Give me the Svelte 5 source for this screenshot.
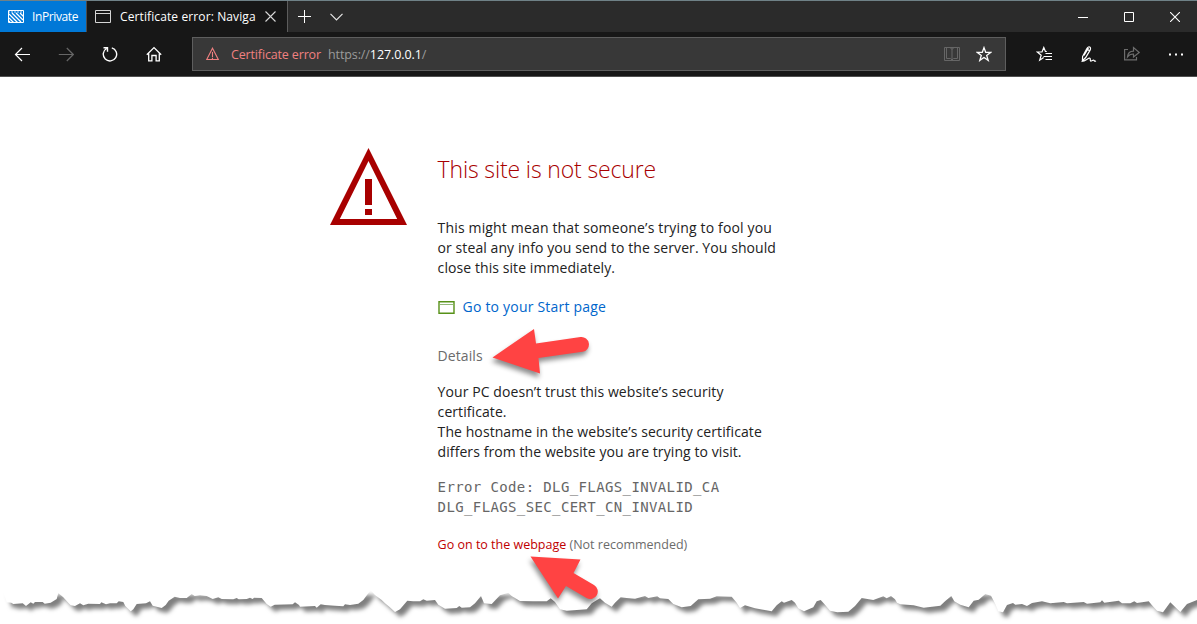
<script>
  const edgeParts = [
    [0, '20,67 34,68 40,72 68,70 78,78 92,67 100,71 105,66 128,66 134,71 152,68 170,57 175,39 190,52 206,70 212,76 225,78 240,70 250,76 265,71 300,72 304,67 318,73 330,70 350,70 356,64 370,66 376,78 392,94 400,88 410,72 438,70 450,64 458,77 485,84 497,75 506,62 524,50 540,54 560,54 575,42 584,48 600,46 620,48 638,57 655,52 665,57 700,58 710,54 716,58 740,57 750,53 758,57 762,53 785,54 800,72 812,80 824,74 878,73 885,67 897,75'],
    [300, '0,80 45,78 50,83 62,73 75,75 105,77 130,79 135,73 150,75 175,71 190,60 212,30 225,45 245,60 255,70 268,80 285,96 300,88 322,62 340,64 360,64 370,58 380,62 405,60 415,74 435,86 470,84 478,78 485,83 510,82 525,70 543,48 552,70 575,72 600,46 625,38 635,48 660,63 700,64 740,64 752,55 765,66 780,88 800,92 860,88 875,70 897,56'],
    [600, '0,55 15,68 35,80 45,68 62,52 80,54 105,56 135,48 145,54 172,49 180,55 205,57 220,72 245,82 272,78 295,58 330,56 350,49 395,50 410,68 420,84 435,76 465,85 515,94 530,76 545,64 552,68 575,60 585,68 595,85 612,94 640,82 650,64 662,60 675,74 690,92 712,97 745,95 765,78 785,54 820,60 850,49 860,55 873,48 885,58'],
    [897, '0,68 10,73 50,76 80,83 130,77 145,63 163,48 172,64 190,74 215,82 230,62 245,59 265,42 282,47 295,72 304,94 318,97 330,75 348,69 355,74 375,72 390,78 405,69 435,64 460,70 500,66 510,70 560,66 570,71 610,67 615,61 622,68 665,62 675,70 700,70 712,64 720,69 755,64 765,76 780,92 798,97 820,67 850,96 870,72 900,60']
  ];
  const tear = edgeParts
    .flatMap(([x0, pts]) => pts.split(' ').map((p) => {
      const [x, y] = p.split(',').map(Number);
      return `${(x0 + x / 3).toFixed(1)},${(y / 3).toFixed(1)}`;
    }))
    .join(' ');
</script>

<div class="window">
  <header class="tabs">
    <div class="private">
      <svg width="16" height="13" viewBox="0 0 16 13" fill="none" stroke="#fff">
        <path d="M.5 .5h15v12H.5z" />
        <path d="M0 2h16" stroke-width="1" stroke-dasharray="2 1" opacity=".8" />
        <path d="M1 4l9 9M1 8l5 5M4 3l9 9M8 3l7 7M12 3l4 4M1 11l1 1" stroke-width="1.3" />
      </svg>
      <span>InPrivate</span>
    </div>
    <div class="tab">
      <svg width="16" height="13" viewBox="0 0 16 13" fill="none" stroke="#d5d5d5"><path d="M.5 .5h15v12H.5zM0 3.5h16" /></svg>
      <span class="tabtitle">Certificate error: Naviga</span>
      <svg width="11" height="11" viewBox="0 0 11 11" stroke="#d8d8d8" stroke-width="1.1"><path d="M.5 .5l10 10M10.500 .5l-10 10" /></svg>
    </div>
    <div class="tabtools">
      <svg width="13" height="13" viewBox="0 0 13 13" stroke="#fff"><path d="M6.500 0v13M0 6.500h13" /></svg>
      <svg width="14" height="8" viewBox="0 0 14 8" fill="none" stroke="#e6e6e6" stroke-width="1.2"><path d="M.5 .8L6.500 7l6-6.200" /></svg>
    </div>
    <div class="controls">
      <svg width="10" height="10" viewBox="0 0 10 10" stroke="#fff"><path d="M0 5.500h10" /></svg>
      <svg width="10" height="10" viewBox="0 0 10 10" fill="none" stroke="#fff"><path d="M.5 .5h9v9h-9z" /></svg>
      <svg width="10" height="10" viewBox="0 0 10 10" stroke="#fff" stroke-width="1.1"><path d="M0 0l10 10M10 0L0 10" /></svg>
    </div>
  </header>

  <nav class="toolbar">
    <div class="navicons">
      <svg width="16" height="16" viewBox="0 0 16 16" fill="none" stroke="#fff" stroke-width="1.2"><path d="M16 8.500H1.500M8 2L1.500 8.500 8 15" /></svg>
      <svg width="16" height="16" viewBox="0 0 16 16" fill="none" stroke="#666" stroke-width="1.2"><path d="M.8 8.500h14.500M8.800 2l6.500 6.500L8.800 15" /></svg>
      <svg width="16" height="16" viewBox="0 0 16 16" fill="none" stroke="#fff" stroke-width="1.4"><path d="M9.800 1.800a6.700 6.700 0 1 1-5.300.7M1.500 1.800h4v4" /></svg>
      <svg width="16" height="16" viewBox="0 0 16 16" fill="none" stroke="#fff" stroke-width="1.3"><path d="M.8 8.800L8 1.600l7.200 7.200M2.700 7.500v7.400h3.200V9.500h4.200v5.400h3.200V7.500" /></svg>
    </div>
    <div class="address">
      <svg width="14" height="14" viewBox="0 0 14 14" fill="none" stroke="#f08080"><path d="M6.500 1.200L12.300 12.500H.7zM6.500 5v5M6.500 10.800v1.200" stroke-width="1.1" /></svg>
      <span class="certerror">Certificate error</span>
      <span class="url">https://<b>127.0.0.1</b>/</span>
      <svg class="book" width="16" height="16" viewBox="0 0 16 16" fill="none" stroke="#666"><path d="M.5 1.500h15v13H.5zM2.500 2v10.500h4L8 14l1.500-1.500h4V2M8 2v12M6.500 2L8 3.500 9.500 2" /></svg>
      <svg class="star" width="16" height="16" viewBox="0 0 16 16" fill="none" stroke="#fff" stroke-width="1.3"><path d="M8 1.600l1.700 4.700h5.100l-4.100 3.100 1.500 5L8 11.500l-4.200 2.900 1.500-5-4.100-3.100h5.100z" /></svg>
    </div>
    <div class="actions">
      <svg width="17" height="16" viewBox="0 0 17 16" fill="none" stroke="#fff" stroke-width="1.2"><path d="M10.800 5.500H9.400L7.800 1.500 6 6H1.300l3.900 3.200-1.500 5 4-2.600M9.500 7.500H16M7.500 10.500H16M9.500 13.500H16" /></svg>
      <svg width="17" height="17" viewBox="0 0 17 17" fill="none" stroke="#fff" stroke-width="1.200"><path d="M2.600 10.500L6.900 2.500c.8-1.400 2.300-2 3.100-1.300.9.800.4 2.300-.2 3.400L5.700 11.500 2.400 14.700zM6.800 3l2.700 1.800M4 9.500L8.500 2M1.500 15.500c4 0 5.800-2.800 7.600-3.300 2.300-.6.2 3.500 2.200 2.800 1.500-.6 2.200-1.500 2.900-.4.4.7 1 .8 1.800.4" /></svg>
      <svg width="17" height="16" viewBox="0 0 17 16" fill="none" stroke="#6d6d6d" stroke-width="1.2"><path d="M4 3.500H.6v10.400h11.900V11M3.500 10.800c.4-4 2.800-5.700 6-5.700V1.600l5.700 4.900L9.500 11V8c-2.600-.1-4.500.7-6 2.800z" /></svg>
      <svg class="dots" width="15" height="3" viewBox="0 0 15 3" fill="#fff"><path d="M0 .5h2v2H0zM6 .5h2v2H6zM12 .5h2v2h-2z" /></svg>
    </div>
  </nav>

  <main>
    <svg class="warning" width="78" height="78" viewBox="0 0 78 78">
      <path fill="#a80000" fill-rule="evenodd" d="M38.500 0L77 77H0zM38.500 13L9.800 71h57.400z" />
      <path fill="#a80000" d="M35 31h7v26h-7zM35 61h7v6h-7z" />
    </svg>
    <section>
      <h1>This site is not secure</h1>
      <p class="lead"><span>This might mean that someone’s trying to fool you</span><br />or steal any info you send to the server. You should<br />close this site immediately.</p>
      <a class="start" href="#start">
        <svg width="17" height="13" viewBox="0 0 17 13" fill="none" stroke="#579118"><path d="M1 .8h15v11.400H1z" stroke-width="1.400" /><path d="M2 3.500h13" stroke="#93b879" /></svg>
        <span>Go to your Start page</span>
      </a>
      <div class="details">Details</div>
      <p class="why">Your PC doesn’t trust this website’s security<br />certificate.<br />The hostname in the website’s security certificate<br />differs from the website you are trying to visit.</p>
      <p class="code">Error Code: DLG_FLAGS_INVALID_CA<br />DLG_FLAGS_SEC_CERT_CN_INVALID</p>
      <p class="go"><a href="#continue">Go on to the webpage</a> <span>(Not recommended)</span></p>
    </section>
  </main>

  <svg class="tear" width="1197" height="44" viewBox="0 0 1197 44">
    <polygon points={`3,10 ${tear} 1210,16 1210,10`} fill="#fff" />
  </svg>
  <svg class="arrows" width="130" height="290" viewBox="480 320 130 290" fill="#ff4343">
    <path d="M492.500 357.500L534 329l2 14.500L580.500 337a7.400 7.400 0 0 1 2 14.800L538.500 358l1.500 15.500z" />
    <path d="M530.500 556.500L580.500 559.500l-7 13.500 20.500 12a7.500 7.500 0 0 1-7.500 13L566 586l-8 12.500z" />
  </svg>
</div>

<style>
  :global(body) { margin: 0; background: #fff; overflow: hidden; }
  .window { position: relative; width: 1197px; height: 624px; overflow: hidden; font-family: "Open Sans", "Noto Sans", sans-serif; background: #fff; box-sizing: border-box; }
  svg { display: block; flex: none; }
  span, h1, p, .details { white-space: nowrap; }
  .tabs { height: 32px; box-sizing: border-box; border-top: 1px solid #6f8187; background: #2b2b2b; display: flex; align-items: stretch; font-size: 12px; color: #fff; }
  .private { width: 86px; box-sizing: border-box; background: #0078d7; display: flex; align-items: center; padding-left: 8px; gap: 8px; }
  .private span { letter-spacing: -.38px; }
  .tab { width: 202px; box-sizing: border-box; background: #171717; border-left: 1px solid #4c4c4c; border-right: 1px solid #5c5c5c; display: flex; align-items: center; padding-left: 8px; }
  .tabtitle { width: 145px; margin-left: 9px; letter-spacing: .11px; }
  .tabtools { display: flex; align-items: center; gap: 19px; padding-left: 10px; }
  .controls { margin-left: auto; display: flex; align-items: center; gap: 36px; padding-right: 17px; }
  .toolbar { height: 45px; box-sizing: border-box; background: #171717; border-bottom: 1px solid #505050; display: flex; align-items: center; }
  .navicons { display: flex; gap: 28px; padding-left: 14px; width: 178px; }
  .address { width: 814px; height: 34px; box-sizing: border-box; border: 1px solid #5e5e5e; background: #383838; display: flex; align-items: center; padding-left: 13px; font-size: 12.500px; }
  .certerror { color: #f08080; width: 91px; margin-left: 11px; letter-spacing: -.15px; }
  .url { color: #9b9b9b; margin-left: 6px; letter-spacing: -.1px; }
  .url b { color: #fff; font-weight: 400; }
  .book { margin-left: auto; }
  .star { margin: 0 13px 0 16px; }
  .actions { display: flex; align-items: center; gap: 27px; padding-left: 30px; }
  .dots { margin-left: 1px; }
  main { display: flex; padding: 71px 0 0 330px; color: #222; }
  .warning { margin-right: 29.600px; }
  section { width: 380px; }
  h1, p { margin: 0; font-weight: 400; }
  h1 { color: #a80000; font-size: 23px; font-weight: 300; line-height: 32px; margin-top: 5px; letter-spacing: -.15px; }
  p, .start, .details { font-size: 14px; line-height: 20px; letter-spacing: .08px; }
  .lead { margin-top: 33px; }
  .lead span { letter-spacing: .16px; }
  .start { display: flex; align-items: center; gap: 8px; color: #0066cc; text-decoration: none; margin-top: 19px; letter-spacing: .2px; }
  .details { color: #6b6b6b; margin-top: 29px; }
  .why { margin-top: 16px; }
  .code { font-family: "DejaVu Sans Mono", monospace; font-size: 14px; letter-spacing: .38px; color: #666; margin-top: 15px; }
  .go { font-size: 12.500px; margin-top: 18px; color: #6b6b6b; letter-spacing: 0; }
  .go a { color: #c00000; text-decoration: none; }
  .tear { position: absolute; left: 0; top: 580px; filter: drop-shadow(5px 5px 2px rgba(0, 0, 0, .5)); }
  .arrows { position: absolute; left: 480px; top: 320px; filter: drop-shadow(-1px 4px 2.500px rgba(0, 0, 0, .45)); }
</style>
